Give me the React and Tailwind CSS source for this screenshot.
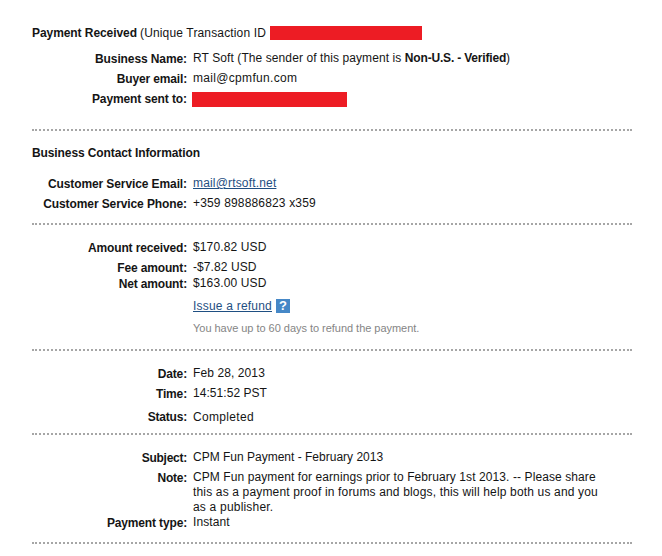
const Divider = () => <div className="w-[600px] border-t-2 border-dotted border-[#a6a6a6]" />;

const Row = ({ label, labelClass = "pt-px tracking-[-0.15px]", className = "h-5", children }) => (
  <div className={`flex ${className}`}>
    <div className={`w-[155px] shrink-0 text-right font-bold whitespace-nowrap ${labelClass}`}>
      {label}
    </div>
    <div className="ml-1.5 whitespace-nowrap">{children}</div>
  </div>
);

const App = () => {
  return (
    <div className="h-[556px] w-[662px] overflow-hidden bg-white pl-8 pt-[26px] font-['Liberation_Sans',Arial,sans-serif] text-[12px] leading-[15px] text-[#151515]">
      <div className="flex h-[25px] whitespace-nowrap">
        <b className="w-[108px] tracking-[-0.07px]">Payment Received</b>
        <span className="w-[130px] tracking-[0.15px]">(Unique Transaction ID</span>
        <div className="h-3.5 w-[152px] bg-[#ed1c24]" />
      </div>
      <Row label="Business Name:" labelClass="pt-px tracking-[-0.1px]">
        <span className="tracking-[0.09px]">RT Soft (The sender of this payment is </span>
        <b className="tracking-[-0.18px]">Non-U.S. - Verified</b>)
      </Row>
      <Row label="Buyer email:">
        <span className="tracking-[0.32px]">mail@cpmfun.com</span>
      </Row>
      <Row label="Payment sent to:" labelClass="pt-px tracking-[-0.1px]" className="h-[38px]">
        <div className="-ml-px mt-px h-[15px] w-[155px] bg-[#ed1c24]" />
      </Row>
      <Divider />

      <h2 className="mt-[15px] h-[30px] font-bold tracking-[-0.1px]">Business Contact Information</h2>
      <Row label="Customer Service Email:" labelClass="pt-px tracking-[-0.1px]">
        <a href="#" className="tracking-[0.17px] text-[#1f4f82] underline">mail@rtsoft.net</a>
      </Row>
      <Row label="Customer Service Phone:" labelClass="pt-px tracking-[-0.1px]" className="h-[27px]">
        <span className="tracking-[0.16px]">+359 898886823 x359</span>
      </Row>
      <Divider />

      <Row label="Amount received:" className="mt-[15px] h-5">
        <span className="tracking-[0.13px]">$170.82 USD</span>
      </Row>
      <Row label="Fee amount:" className="h-4">
        <span className="tracking-[0.08px]">-$7.82 USD</span>
      </Row>
      <Row label="Net amount:" className="h-[23px]">
        <span className="tracking-[0.13px]">$163.00 USD</span>
      </Row>
      <Row className="h-[22px]">
        <div className="flex">
          <a href="#" className="w-[79px] tracking-[0.21px] text-[#1f4f82] underline">Issue a refund</a>
          <span className="ml-1 h-3.5 w-3.5 bg-[#4688c7] text-center text-[13px] font-bold leading-[14px] text-white">?</span>
        </div>
      </Row>
      <Row className="h-7">
        <span className="text-[11px] tracking-[-0.03px] text-[#858585]">
          You have up to 60 days to refund the payment.
        </span>
      </Row>
      <Divider />

      <Row label="Date:" className="mt-[15px] h-5">
        <span className="tracking-[0.1px]">Feb 28, 2013</span>
      </Row>
      <Row label="Time:" className="h-6">
        <span className="tracking-[0.05px]">14:51:52 PST</span>
      </Row>
      <Row label="Status:" labelClass="tracking-[-0.2px]" className="h-[23px]">
        <span className="tracking-[0.32px]">Completed</span>
      </Row>
      <Divider />

      <Row label="Subject:" labelClass="pt-px tracking-[-0.25px]" className="mt-[15px] h-5">
        CPM Fun Payment - February 2013
      </Row>
      <Row label="Note:" labelClass="pt-px tracking-[-0.25px]" className="h-[45px]">
        <p className="tracking-[0.09px]">CPM Fun payment for earnings prior to February 1st 2013. -- Please share</p>
        <p className="tracking-[0.16px]">this as a payment proof in forums and blogs, this will help both us and you</p>
        <p className="tracking-[0.2px]">as a publisher.</p>
      </Row>
      <Row label="Payment type:" className="h-[27px]">
        <span className="tracking-[0.1px]">Instant</span>
      </Row>
      <Divider />
    </div>
  );
};

export default App;
